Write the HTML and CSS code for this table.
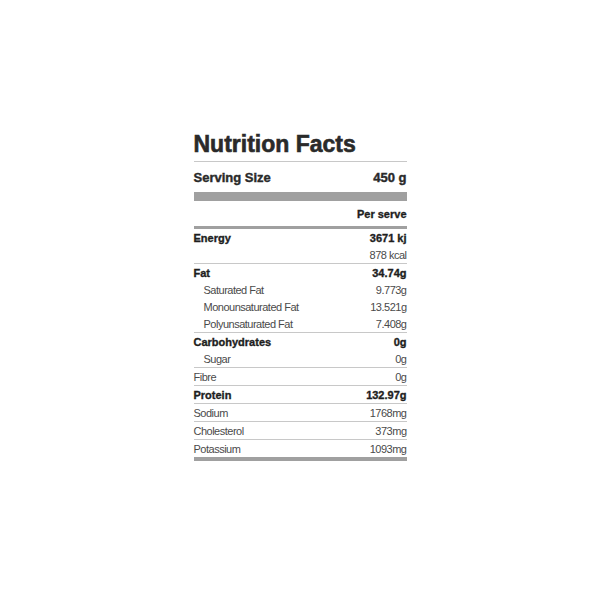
FILE: index.html
```html
<!DOCTYPE html>
<html>
<head>
<meta charset="utf-8">
<link rel="stylesheet" href="styles.css">
</head>
<body>
<div class="card">
  <div class="title">Nutrition Facts</div>
  <div class="serving"><span>Serving Size</span><span>450 g</span></div>
  <div class="bar bar-thick"></div>
  <div class="per">Per serve</div>
  <div class="bar bar-mid"></div>
  <div class="group">
    <div class="row bold"><span>Energy</span><span>3671 kj</span></div>
    <div class="row"><span></span><span>878 kcal</span></div>
  </div>
  <div class="group">
    <div class="row bold"><span>Fat</span><span>34.74g</span></div>
    <div class="row sub"><span>Saturated Fat</span><span>9.773g</span></div>
    <div class="row sub"><span>Monounsaturated Fat</span><span>13.521g</span></div>
    <div class="row sub"><span>Polyunsaturated Fat</span><span>7.408g</span></div>
  </div>
  <div class="group">
    <div class="row bold"><span>Carbohydrates</span><span>0g</span></div>
    <div class="row sub"><span>Sugar</span><span>0g</span></div>
  </div>
  <div class="group">
    <div class="row"><span>Fibre</span><span>0g</span></div>
  </div>
  <div class="group">
    <div class="row bold"><span>Protein</span><span>132.97g</span></div>
  </div>
  <div class="group">
    <div class="row"><span>Sodium</span><span>1768mg</span></div>
  </div>
  <div class="group">
    <div class="row"><span>Cholesterol</span><span>373mg</span></div>
  </div>
  <div class="group last">
    <div class="row"><span>Potassium</span><span>1093mg</span></div>
  </div>
  <div class="bar bar-bottom"></div>
</div>
</body>
</html>
```
FILE: styles.css
```css
html, body {
  margin: 0;
  padding: 0;
  background: #fff;
}
body {
  padding-top: 131px;
  font-family: "Liberation Sans", Arial, sans-serif;
  color: #555;
}
.card {
  width: 213px;
  margin: 0 auto;
}
.title {
  font-size: 23px;
  line-height: 26px;
  font-weight: 700;
  color: #2a2a2a;
  padding-bottom: 4px;
  border-bottom: 1px solid #c8c8c8;
  -webkit-text-stroke: 0.6px #2a2a2a;
}
.serving {
  height: 30px;
  display: flex;
  align-items: center;
  justify-content: space-between;
  font-size: 13px;
  font-weight: 700;
  color: #2a2a2a;
  -webkit-text-stroke: 0.4px #2a2a2a;
}
.bar {
  background: #a0a0a0;
}
.bar-thick { height: 9px; }
.bar-mid { height: 3px; }
.bar-bottom { height: 4px; }
.per {
  height: 25px;
  display: flex;
  align-items: center;
  justify-content: flex-end;
  font-size: 11px;
  font-weight: 700;
  color: #1e1e1e;
  -webkit-text-stroke: 0.35px #1e1e1e;
}
.group {
  border-bottom: 1px solid #c8c8c8;
}
.group.last {
  border-bottom: none;
}
.row {
  height: 17px;
  display: flex;
  align-items: center;
  justify-content: space-between;
  font-size: 11px;
  letter-spacing: -0.5px;
  color: #4a4a4a;
}
.row.bold {
  font-size: 11px;
  font-weight: 700;
  letter-spacing: 0;
  color: #1e1e1e;
  -webkit-text-stroke: 0.35px #1e1e1e;
}
.row.sub span:first-child {
  padding-left: 10px;
}
```
